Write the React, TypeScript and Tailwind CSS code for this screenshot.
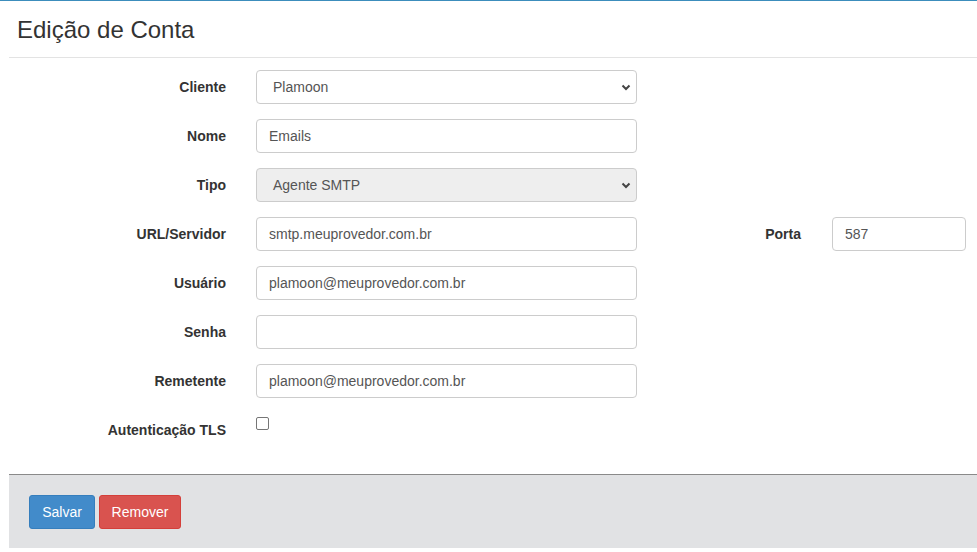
import React from "react";

const font = { fontFamily: '"Liberation Sans", Arial, sans-serif' };

function Chevron() {
  return (
    <svg className="pointer-events-none absolute right-[5px] top-1/2 -translate-y-1/2" width="10" height="10" viewBox="0 0 10 10">
      <path d="M1.5 3.5 L5 7 L8.5 3.5" fill="none" stroke="#444" strokeWidth="2" />
    </svg>
  );
}

function Label({ children, w = "w-[217px]" }: { children: React.ReactNode; w?: string }) {
  return <div className={`${w} shrink-0 text-right text-[14px] font-bold text-[#333]`}>{children}</div>;
}

function TextInput({ value, w = "w-[381px]" }: { value: string; w?: string }) {
  return (
    <div className={`${w} h-[34px] shrink-0 rounded-[4px] border border-[#ccc] bg-white px-[12px] flex items-center text-[14px] text-[#555]`}>
      {value}
    </div>
  );
}

function Select({ value, disabled }: { value: string; disabled?: boolean }) {
  return (
    <div className={`relative w-[381px] h-[34px] shrink-0 rounded-[4px] border border-[#ccc] ${disabled ? "bg-[#eee]" : "bg-white"} pl-[16px] flex items-center text-[14px] text-[#555]`}>
      {value}
      <Chevron />
    </div>
  );
}

export default function App() {
  return (
    <div className="w-[977px] h-[552px] bg-white overflow-hidden" style={font}>
      <div className="h-[1px] bg-[#3c8dbc]" />
      <div className="ml-[9px]">
        <div className="pl-[8px] pt-[16px] pb-[14px] border-b border-[#e3e3e3]">
          <h3 className="text-[24px] leading-[26px] text-[#333]">Edição de Conta</h3>
        </div>
        <div className="pt-[12px] flex flex-col gap-[15px]">
          <div className="flex items-center">
            <Label>Cliente</Label>
            <div className="ml-[30px]"><Select value="Plamoon" /></div>
          </div>
          <div className="flex items-center">
            <Label>Nome</Label>
            <div className="ml-[30px]"><TextInput value="Emails" /></div>
          </div>
          <div className="flex items-center">
            <Label>Tipo</Label>
            <div className="ml-[30px]"><Select value="Agente SMTP" disabled /></div>
          </div>
          <div className="flex items-center">
            <Label>URL/Servidor</Label>
            <div className="ml-[30px]"><TextInput value="smtp.meuprovedor.com.br" /></div>
            <Label w="w-[164px]">Porta</Label>
            <div className="ml-[31px]"><TextInput value="587" w="w-[134px]" /></div>
          </div>
          <div className="flex items-center">
            <Label>Usuário</Label>
            <div className="ml-[30px]"><TextInput value="plamoon@meuprovedor.com.br" /></div>
          </div>
          <div className="flex items-center">
            <Label>Senha</Label>
            <div className="ml-[30px]"><TextInput value="" /></div>
          </div>
          <div className="flex items-center">
            <Label>Remetente</Label>
            <div className="ml-[30px]"><TextInput value="plamoon@meuprovedor.com.br" /></div>
          </div>
          <div className="flex items-center h-[34px]">
            <Label>Autenticação TLS</Label>
            <div className="ml-[30px] self-start pt-[4px]">
              <div className="w-[13px] h-[13px] rounded-[2px] border border-[#767676] bg-white" />
            </div>
          </div>
        </div>
        <div className="mt-[27px] border-t border-[#8a8a8a] bg-[#e1e2e4] px-[20px] pt-[20px] pb-[19px] flex gap-[4px]">
          <div className="h-[34px] w-[66px] rounded-[3px] border border-[#357ebd] bg-[#428bca] flex items-center justify-center text-[14px] text-white">Salvar</div>
          <div className="h-[34px] w-[82px] rounded-[3px] border border-[#d43f3a] bg-[#d9534f] flex items-center justify-center text-[14px] text-white">Remover</div>
        </div>
      </div>
    </div>
  );
}
